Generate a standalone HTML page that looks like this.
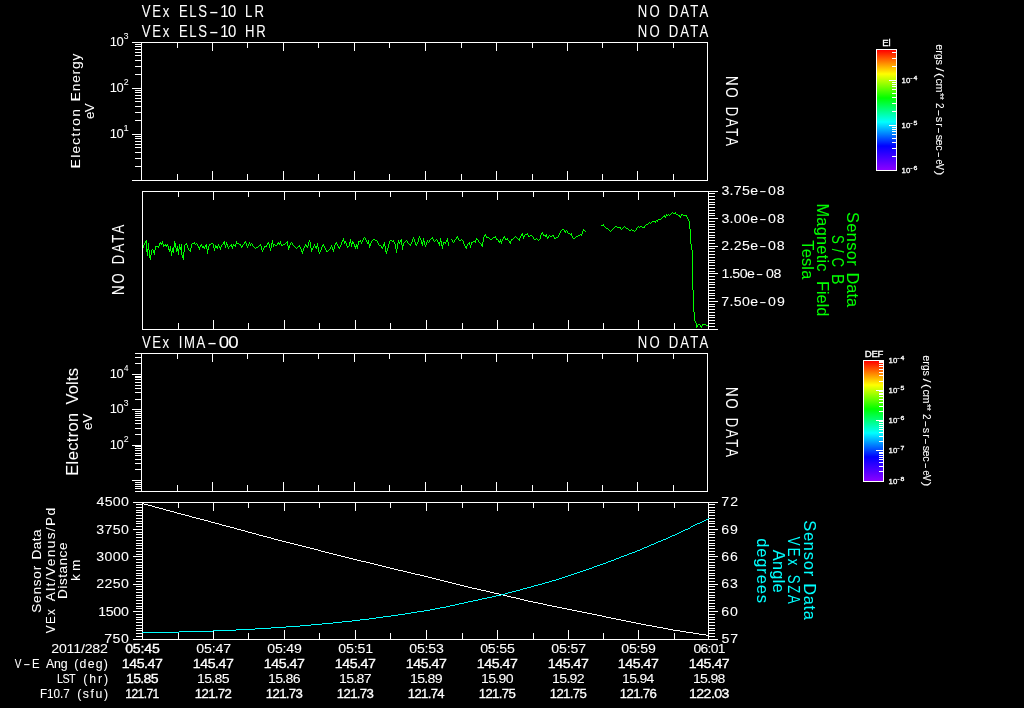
<!DOCTYPE html>
<html lang="en">
<head>
<meta charset="utf-8">
<title>VEx ELS / IMA summary plot 2011/282</title>
<style>
html,body{margin:0;padding:0;background:#000;}
body{width:1024px;height:708px;overflow:hidden;}
svg{display:block;will-change:transform;}
text{font-family:"Liberation Sans",sans-serif;fill:#fff;stroke:#fff;stroke-width:0.06;white-space:pre;}
.l{font-size:16.4px}
.m{font-size:12.3px}
.s{font-size:9.6px}
.b{stroke-width:0.3}
.g{fill:#00ff00;stroke:#00ff00}
.c{fill:#00ffff;stroke:#00ffff}
</style>
</head>
<body>
<svg width="1024" height="708" viewBox="0 0 1024 708">
<rect width="1024" height="708" fill="#000"/>
<defs><linearGradient id="rb" x1="0" y1="0" x2="0" y2="1"><stop offset="0" stop-color="#ff0000"/><stop offset="0.2" stop-color="#ffff00"/><stop offset="0.4" stop-color="#00ff00"/><stop offset="0.6" stop-color="#00ffff"/><stop offset="0.8" stop-color="#0000ff"/><stop offset="1" stop-color="#8c00ff"/></linearGradient></defs>
<rect x="877" y="50" width="19" height="120" fill="url(#rb)"/>
<rect x="864" y="361" width="19" height="120" fill="url(#rb)"/>
<path fill="#fff" shape-rendering="crispEdges" d="M132 42h576v1h-576zM132 180h576v1h-576zM141 42h1v139h-1zM707 42h1v139h-1zM177 42h1v6h-1zM177 174h1v7h-1zM212 42h1v9h-1zM212 171h1v10h-1zM247 42h1v6h-1zM247 174h1v7h-1zM283 42h1v9h-1zM283 171h1v10h-1zM318 42h1v6h-1zM318 174h1v7h-1zM354 42h1v9h-1zM354 171h1v10h-1zM389 42h1v6h-1zM389 174h1v7h-1zM425 42h1v9h-1zM425 171h1v10h-1zM461 42h1v6h-1zM461 174h1v7h-1zM496 42h1v9h-1zM496 171h1v10h-1zM532 42h1v6h-1zM532 174h1v7h-1zM567 42h1v9h-1zM567 171h1v10h-1zM602 42h1v6h-1zM602 174h1v7h-1zM637 42h1v9h-1zM637 171h1v10h-1zM673 42h1v6h-1zM673 174h1v7h-1zM132 42h10v1h-10zM132 88h10v1h-10zM132 134h10v1h-10zM132 180h10v1h-10zM135 166h7v1h-7zM135 158h7v1h-7zM135 152h7v1h-7zM135 147h7v1h-7zM135 144h7v1h-7zM135 141h7v1h-7zM135 138h7v1h-7zM135 136h7v1h-7zM135 120h7v1h-7zM135 112h7v1h-7zM135 106h7v1h-7zM135 101h7v1h-7zM135 98h7v1h-7zM135 95h7v1h-7zM135 92h7v1h-7zM135 90h7v1h-7zM135 74h7v1h-7zM135 66h7v1h-7zM135 60h7v1h-7zM135 55h7v1h-7zM135 52h7v1h-7zM135 49h7v1h-7zM135 46h7v1h-7zM135 44h7v1h-7zM135 353h573v1h-573zM135 491h573v1h-573zM141 353h1v139h-1zM707 353h1v139h-1zM177 353h1v6h-1zM177 485h1v7h-1zM212 353h1v9h-1zM212 482h1v10h-1zM247 353h1v6h-1zM247 485h1v7h-1zM283 353h1v9h-1zM283 482h1v10h-1zM318 353h1v6h-1zM318 485h1v7h-1zM354 353h1v9h-1zM354 482h1v10h-1zM389 353h1v6h-1zM389 485h1v7h-1zM425 353h1v9h-1zM425 482h1v10h-1zM461 353h1v6h-1zM461 485h1v7h-1zM496 353h1v9h-1zM496 482h1v10h-1zM532 353h1v6h-1zM532 485h1v7h-1zM567 353h1v9h-1zM567 482h1v10h-1zM602 353h1v6h-1zM602 485h1v7h-1zM637 353h1v9h-1zM637 482h1v10h-1zM673 353h1v6h-1zM673 485h1v7h-1zM132 374h10v1h-10zM132 409h10v1h-10zM132 445h10v1h-10zM132 480h10v1h-10zM135 488h7v1h-7zM135 486h7v1h-7zM135 484h7v1h-7zM135 482h7v1h-7zM135 469h7v1h-7zM135 463h7v1h-7zM135 459h7v1h-7zM135 455h7v1h-7zM135 453h7v1h-7zM135 450h7v1h-7zM135 448h7v1h-7zM135 446h7v1h-7zM135 434h7v1h-7zM135 428h7v1h-7zM135 423h7v1h-7zM135 420h7v1h-7zM135 417h7v1h-7zM135 415h7v1h-7zM135 413h7v1h-7zM135 411h7v1h-7zM135 399h7v1h-7zM135 392h7v1h-7zM135 388h7v1h-7zM135 385h7v1h-7zM135 382h7v1h-7zM135 379h7v1h-7zM135 377h7v1h-7zM135 376h7v1h-7zM135 363h7v1h-7zM135 357h7v1h-7zM142 191h567v1h-567zM142 329h567v1h-567zM142 191h1v139h-1zM708 191h1v139h-1zM178 191h1v6h-1zM178 323h1v7h-1zM213 191h1v9h-1zM213 320h1v10h-1zM248 191h1v6h-1zM248 323h1v7h-1zM284 191h1v9h-1zM284 320h1v10h-1zM319 191h1v6h-1zM319 323h1v7h-1zM355 191h1v9h-1zM355 320h1v10h-1zM390 191h1v6h-1zM390 323h1v7h-1zM426 191h1v9h-1zM426 320h1v10h-1zM462 191h1v6h-1zM462 323h1v7h-1zM497 191h1v9h-1zM497 320h1v10h-1zM533 191h1v6h-1zM533 323h1v7h-1zM568 191h1v9h-1zM568 320h1v10h-1zM603 191h1v6h-1zM603 323h1v7h-1zM638 191h1v9h-1zM638 320h1v10h-1zM674 191h1v6h-1zM674 323h1v7h-1zM708 191h10v1h-10zM708 193h7v1h-7zM708 196h7v1h-7zM708 199h7v1h-7zM708 202h7v1h-7zM708 204h7v1h-7zM708 207h7v1h-7zM708 210h7v1h-7zM708 213h7v1h-7zM708 215h7v1h-7zM708 218h10v1h-10zM708 221h7v1h-7zM708 224h7v1h-7zM708 226h7v1h-7zM708 229h7v1h-7zM708 232h7v1h-7zM708 235h7v1h-7zM708 237h7v1h-7zM708 240h7v1h-7zM708 243h7v1h-7zM708 246h10v1h-10zM708 248h7v1h-7zM708 251h7v1h-7zM708 254h7v1h-7zM708 257h7v1h-7zM708 260h7v1h-7zM708 262h7v1h-7zM708 265h7v1h-7zM708 268h7v1h-7zM708 271h7v1h-7zM708 273h10v1h-10zM708 276h7v1h-7zM708 279h7v1h-7zM708 282h7v1h-7zM708 284h7v1h-7zM708 287h7v1h-7zM708 290h7v1h-7zM708 293h7v1h-7zM708 295h7v1h-7zM708 298h7v1h-7zM708 301h10v1h-10zM708 304h7v1h-7zM708 306h7v1h-7zM708 309h7v1h-7zM708 312h7v1h-7zM708 315h7v1h-7zM708 317h7v1h-7zM708 320h7v1h-7zM708 323h7v1h-7zM708 326h7v1h-7zM708 329h10v1h-10zM142 502h567v1h-567zM142 639h567v1h-567zM142 502h1v138h-1zM708 502h1v138h-1zM178 502h1v6h-1zM178 633h1v7h-1zM213 502h1v9h-1zM213 630h1v10h-1zM248 502h1v6h-1zM248 633h1v7h-1zM284 502h1v9h-1zM284 630h1v10h-1zM319 502h1v6h-1zM319 633h1v7h-1zM355 502h1v9h-1zM355 630h1v10h-1zM390 502h1v6h-1zM390 633h1v7h-1zM426 502h1v9h-1zM426 630h1v10h-1zM462 502h1v6h-1zM462 633h1v7h-1zM497 502h1v9h-1zM497 630h1v10h-1zM533 502h1v6h-1zM533 633h1v7h-1zM568 502h1v9h-1zM568 630h1v10h-1zM603 502h1v6h-1zM603 633h1v7h-1zM638 502h1v9h-1zM638 630h1v10h-1zM674 502h1v6h-1zM674 633h1v7h-1zM708 502h10v1h-10zM133 502h10v1h-10zM708 504h7v1h-7zM136 504h7v1h-7zM708 507h7v1h-7zM136 507h7v1h-7zM708 510h7v1h-7zM136 510h7v1h-7zM708 512h7v1h-7zM136 512h7v1h-7zM708 515h7v1h-7zM136 515h7v1h-7zM708 518h7v1h-7zM136 518h7v1h-7zM708 521h7v1h-7zM136 521h7v1h-7zM708 523h7v1h-7zM136 523h7v1h-7zM708 526h7v1h-7zM136 526h7v1h-7zM708 529h10v1h-10zM133 529h10v1h-10zM708 532h7v1h-7zM136 532h7v1h-7zM708 534h7v1h-7zM136 534h7v1h-7zM708 537h7v1h-7zM136 537h7v1h-7zM708 540h7v1h-7zM136 540h7v1h-7zM708 543h7v1h-7zM136 543h7v1h-7zM708 545h7v1h-7zM136 545h7v1h-7zM708 548h7v1h-7zM136 548h7v1h-7zM708 551h7v1h-7zM136 551h7v1h-7zM708 554h7v1h-7zM136 554h7v1h-7zM708 556h10v1h-10zM133 556h10v1h-10zM708 559h7v1h-7zM136 559h7v1h-7zM708 562h7v1h-7zM136 562h7v1h-7zM708 565h7v1h-7zM136 565h7v1h-7zM708 567h7v1h-7zM136 567h7v1h-7zM708 570h7v1h-7zM136 570h7v1h-7zM708 573h7v1h-7zM136 573h7v1h-7zM708 575h7v1h-7zM136 575h7v1h-7zM708 578h7v1h-7zM136 578h7v1h-7zM708 581h7v1h-7zM136 581h7v1h-7zM708 584h10v1h-10zM133 584h10v1h-10zM708 586h7v1h-7zM136 586h7v1h-7zM708 589h7v1h-7zM136 589h7v1h-7zM708 592h7v1h-7zM136 592h7v1h-7zM708 595h7v1h-7zM136 595h7v1h-7zM708 597h7v1h-7zM136 597h7v1h-7zM708 600h7v1h-7zM136 600h7v1h-7zM708 603h7v1h-7zM136 603h7v1h-7zM708 606h7v1h-7zM136 606h7v1h-7zM708 608h7v1h-7zM136 608h7v1h-7zM708 611h10v1h-10zM133 611h10v1h-10zM708 614h7v1h-7zM136 614h7v1h-7zM708 617h7v1h-7zM136 617h7v1h-7zM708 619h7v1h-7zM136 619h7v1h-7zM708 622h7v1h-7zM136 622h7v1h-7zM708 625h7v1h-7zM136 625h7v1h-7zM708 628h7v1h-7zM136 628h7v1h-7zM708 630h7v1h-7zM136 630h7v1h-7zM708 633h7v1h-7zM136 633h7v1h-7zM708 636h7v1h-7zM136 636h7v1h-7zM708 639h10v1h-10zM133 639h10v1h-10zM876 49h21v1h-21zM876 170h21v1h-21zM876 49h1v122h-1zM896 49h1v122h-1zM889 80h8v1h-8zM889 125h8v1h-8zM892 156h5v1h-5zM892 148h5v1h-5zM892 142h5v1h-5zM892 138h5v1h-5zM892 134h5v1h-5zM892 131h5v1h-5zM892 129h5v1h-5zM892 127h5v1h-5zM892 111h5v1h-5zM892 103h5v1h-5zM892 97h5v1h-5zM892 93h5v1h-5zM892 89h5v1h-5zM892 86h5v1h-5zM892 84h5v1h-5zM892 82h5v1h-5zM892 66h5v1h-5zM892 58h5v1h-5zM892 52h5v1h-5zM863 360h21v1h-21zM863 481h21v1h-21zM863 360h1v122h-1zM883 360h1v122h-1zM876 390h8v1h-8zM876 420h8v1h-8zM876 450h8v1h-8zM879 471h5v1h-5zM879 466h5v1h-5zM879 462h5v1h-5zM879 459h5v1h-5zM879 457h5v1h-5zM879 455h5v1h-5zM879 453h5v1h-5zM879 452h5v1h-5zM879 441h5v1h-5zM879 436h5v1h-5zM879 432h5v1h-5zM879 429h5v1h-5zM879 427h5v1h-5zM879 425h5v1h-5zM879 423h5v1h-5zM879 421h5v1h-5zM879 411h5v1h-5zM879 406h5v1h-5zM879 402h5v1h-5zM879 399h5v1h-5zM879 396h5v1h-5zM879 394h5v1h-5zM879 393h5v1h-5zM879 391h5v1h-5zM879 381h5v1h-5zM879 375h5v1h-5zM879 372h5v1h-5zM879 369h5v1h-5zM879 366h5v1h-5zM879 364h5v1h-5zM879 362h5v1h-5zM879 361h5v1h-5z"/>
<text transform="translate(110.8,46)" class="m"><tspan x="-0.97" letter-spacing="-0.6" textLength="13.19" lengthAdjust="spacingAndGlyphs">10</tspan></text>
<text transform="translate(124.1,39)" font-size="8.6"><tspan x="-0.34" textLength="4.73" lengthAdjust="spacingAndGlyphs">3</tspan></text>
<text transform="translate(110.8,92)" class="m"><tspan x="-0.97" letter-spacing="-0.6" textLength="13.19" lengthAdjust="spacingAndGlyphs">10</tspan></text>
<text transform="translate(124.1,85)" font-size="8.6"><tspan x="-0.44" textLength="4.89" lengthAdjust="spacingAndGlyphs">2</tspan></text>
<text transform="translate(110.8,138)" class="m"><tspan x="-0.97" letter-spacing="-0.6" textLength="13.19" lengthAdjust="spacingAndGlyphs">10</tspan></text>
<text transform="translate(124.1,131)" font-size="8.6"><tspan x="-0.7" textLength="5.17" lengthAdjust="spacingAndGlyphs">1</tspan></text>
<text transform="translate(110.8,378)" class="m"><tspan x="-0.97" letter-spacing="-0.6" textLength="13.19" lengthAdjust="spacingAndGlyphs">10</tspan></text>
<text transform="translate(124.1,371)" font-size="8.6"><tspan x="-0.2" textLength="4.45" lengthAdjust="spacingAndGlyphs">4</tspan></text>
<text transform="translate(110.8,413)" class="m"><tspan x="-0.97" letter-spacing="-0.6" textLength="13.19" lengthAdjust="spacingAndGlyphs">10</tspan></text>
<text transform="translate(124.1,406)" font-size="8.6"><tspan x="-0.34" textLength="4.73" lengthAdjust="spacingAndGlyphs">3</tspan></text>
<text transform="translate(110.8,449)" class="m"><tspan x="-0.97" letter-spacing="-0.6" textLength="13.19" lengthAdjust="spacingAndGlyphs">10</tspan></text>
<text transform="translate(124.1,442)" font-size="8.6"><tspan x="-0.44" textLength="4.89" lengthAdjust="spacingAndGlyphs">2</tspan></text>
<text transform="translate(722,195)" class="m"><tspan x="-0.57" letter-spacing="0.27" textLength="36.95" lengthAdjust="spacingAndGlyphs">3.75e</tspan><tspan x="37.19" textLength="7.17" lengthAdjust="spacingAndGlyphs">-</tspan><tspan x="46.13" letter-spacing="0.72" textLength="17.39" lengthAdjust="spacingAndGlyphs">08</tspan></text>
<text transform="translate(722,223)" class="m"><tspan x="-0.57" letter-spacing="0.27" textLength="36.95" lengthAdjust="spacingAndGlyphs">3.00e</tspan><tspan x="37.19" textLength="7.17" lengthAdjust="spacingAndGlyphs">-</tspan><tspan x="46.13" letter-spacing="0.72" textLength="17.39" lengthAdjust="spacingAndGlyphs">08</tspan></text>
<text transform="translate(722,250)" class="m"><tspan x="-0.71" letter-spacing="0.3" textLength="37.12" lengthAdjust="spacingAndGlyphs">2.25e</tspan><tspan x="37.19" textLength="7.17" lengthAdjust="spacingAndGlyphs">-</tspan><tspan x="46.13" letter-spacing="0.72" textLength="17.39" lengthAdjust="spacingAndGlyphs">08</tspan></text>
<text transform="translate(722.6,278)" class="m"><tspan x="-1.06" letter-spacing="-0.45" textLength="32.82" lengthAdjust="spacingAndGlyphs">1.50e</tspan><tspan x="33.34" textLength="7.17" lengthAdjust="spacingAndGlyphs">-</tspan><tspan x="43.33" letter-spacing="-0.15" textLength="15.39" lengthAdjust="spacingAndGlyphs">08</tspan></text>
<text transform="translate(722,306)" class="m"><tspan x="-0.71" letter-spacing="0.3" textLength="37.12" lengthAdjust="spacingAndGlyphs">7.50e</tspan><tspan x="37.19" textLength="7.17" lengthAdjust="spacingAndGlyphs">-</tspan><tspan x="46.13" letter-spacing="0.78" textLength="17.54" lengthAdjust="spacingAndGlyphs">09</tspan></text>
<text transform="translate(96.9,506)" class="m"><tspan x="-0.35" letter-spacing="0.22" textLength="32.46" lengthAdjust="spacingAndGlyphs">4500</tspan></text>
<text transform="translate(96.9,534)" class="m"><tspan x="-0.57" letter-spacing="0.28" textLength="32.75" lengthAdjust="spacingAndGlyphs">3750</tspan></text>
<text transform="translate(96.9,561)" class="m"><tspan x="-0.57" letter-spacing="0.28" textLength="32.75" lengthAdjust="spacingAndGlyphs">3000</tspan></text>
<text transform="translate(96.9,588)" class="m"><tspan x="-0.71" letter-spacing="0.32" textLength="32.93" lengthAdjust="spacingAndGlyphs">2250</tspan></text>
<text transform="translate(99.3,616)" class="m"><tspan x="-1.06" letter-spacing="-0.27" textLength="30.21" lengthAdjust="spacingAndGlyphs">1500</tspan></text>
<text transform="translate(105,643)" class="m"><tspan x="-0.71" letter-spacing="0.4" textLength="24.98" lengthAdjust="spacingAndGlyphs">750</tspan></text>
<text transform="translate(722,506)" class="m"><tspan x="-0.71" letter-spacing="0.88" textLength="17.76" lengthAdjust="spacingAndGlyphs">72</tspan></text>
<text transform="translate(722,534)" class="m"><tspan x="-0.71" letter-spacing="0.82" textLength="17.62" lengthAdjust="spacingAndGlyphs">69</tspan></text>
<text transform="translate(722,561)" class="m"><tspan x="-0.71" letter-spacing="0.82" textLength="17.62" lengthAdjust="spacingAndGlyphs">66</tspan></text>
<text transform="translate(722,588)" class="m"><tspan x="-0.71" letter-spacing="0.82" textLength="17.62" lengthAdjust="spacingAndGlyphs">63</tspan></text>
<text transform="translate(722,616)" class="m"><tspan x="-0.71" letter-spacing="0.76" textLength="17.48" lengthAdjust="spacingAndGlyphs">60</tspan></text>
<text transform="translate(722,643)" class="m"><tspan x="-0.57" letter-spacing="0.76" textLength="17.48" lengthAdjust="spacingAndGlyphs">57</tspan></text>
<path fill="#fff" shape-rendering="crispEdges" d="M142 503h2v1h-2zM144 504h4v1h-4zM148 505h4v1h-4zM152 506h3v1h-3zM155 507h4v1h-4zM159 508h4v1h-4zM163 509h3v1h-3zM166 510h4v1h-4zM170 511h4v1h-4zM174 512h3v1h-3zM177 513h4v1h-4zM181 514h4v1h-4zM185 515h4v1h-4zM189 516h3v1h-3zM192 517h4v1h-4zM196 518h4v1h-4zM200 519h4v1h-4zM204 520h4v1h-4zM208 521h3v1h-3zM211 522h4v1h-4zM215 523h4v1h-4zM219 524h3v1h-3zM222 525h4v1h-4zM226 526h4v1h-4zM230 527h4v1h-4zM234 528h3v1h-3zM237 529h4v1h-4zM241 530h4v1h-4zM245 531h3v1h-3zM248 532h4v1h-4zM252 533h4v1h-4zM256 534h3v1h-3zM259 535h4v1h-4zM263 536h4v1h-4zM267 537h4v1h-4zM271 538h3v1h-3zM274 539h4v1h-4zM278 540h4v1h-4zM282 541h4v1h-4zM286 542h4v1h-4zM290 543h4v1h-4zM294 544h4v1h-4zM298 545h4v1h-4zM302 546h4v1h-4zM306 547h4v1h-4zM310 548h4v1h-4zM314 549h4v1h-4zM318 550h3v1h-3zM321 551h4v1h-4zM325 552h4v1h-4zM329 553h4v1h-4zM333 554h4v1h-4zM337 555h4v1h-4zM341 556h4v1h-4zM345 557h4v1h-4zM349 558h4v1h-4zM353 559h4v1h-4zM357 560h4v1h-4zM361 561h5v1h-5zM366 562h4v1h-4zM370 563h4v1h-4zM374 564h4v1h-4zM378 565h4v1h-4zM382 566h4v1h-4zM386 567h4v1h-4zM390 568h4v1h-4zM394 569h4v1h-4zM398 570h5v1h-5zM403 571h4v1h-4zM407 572h4v1h-4zM411 573h4v1h-4zM415 574h5v1h-5zM420 575h4v1h-4zM424 576h4v1h-4zM428 577h4v1h-4zM432 578h4v1h-4zM436 579h4v1h-4zM440 580h4v1h-4zM444 581h4v1h-4zM448 582h4v1h-4zM452 583h4v1h-4zM456 584h4v1h-4zM460 585h4v1h-4zM464 586h4v1h-4zM468 587h4v1h-4zM472 588h5v1h-5zM477 589h4v1h-4zM481 590h5v1h-5zM486 591h4v1h-4zM490 592h4v1h-4zM494 593h5v1h-5zM499 594h4v1h-4zM503 595h4v1h-4zM507 596h4v1h-4zM511 597h5v1h-5zM516 598h4v1h-4zM520 599h4v1h-4zM524 600h4v1h-4zM528 601h5v1h-5zM533 602h5v1h-5zM538 603h5v1h-5zM543 604h4v1h-4zM547 605h5v1h-5zM552 606h5v1h-5zM557 607h5v1h-5zM562 608h5v1h-5zM567 609h5v1h-5zM572 610h5v1h-5zM577 611h5v1h-5zM582 612h5v1h-5zM587 613h5v1h-5zM592 614h5v1h-5zM597 615h5v1h-5zM602 616h4v1h-4zM606 617h5v1h-5zM611 618h5v1h-5zM616 619h5v1h-5zM621 620h5v1h-5zM626 621h5v1h-5zM631 622h5v1h-5zM636 623h5v1h-5zM641 624h5v1h-5zM646 625h6v1h-6zM652 626h5v1h-5zM657 627h6v1h-6zM663 628h5v1h-5zM668 629h5v1h-5zM673 630h7v1h-7zM680 631h6v1h-6zM686 632h7v1h-7zM693 633h6v1h-6zM699 634h7v1h-7zM706 635h2v1h-2z"/>
<path fill="#00ffff" shape-rendering="crispEdges" d="M708 518h1v1h-1zM706 519h2v1h-2zM704 520h2v1h-2zM702 521h2v1h-2zM700 522h2v1h-2zM697 523h3v1h-3zM695 524h2v1h-2zM693 525h2v1h-2zM691 526h2v1h-2zM690 527h1v1h-1zM688 528h2v1h-2zM685 529h3v1h-3zM683 530h2v1h-2zM681 531h2v1h-2zM679 532h2v1h-2zM677 533h2v1h-2zM675 534h2v1h-2zM672 535h3v1h-3zM670 536h2v1h-2zM668 537h2v1h-2zM666 538h2v1h-2zM663 539h3v1h-3zM661 540h2v1h-2zM658 541h3v1h-3zM656 542h2v1h-2zM654 543h2v1h-2zM651 544h3v1h-3zM649 545h2v1h-2zM647 546h2v1h-2zM644 547h3v1h-3zM642 548h2v1h-2zM640 549h2v1h-2zM637 550h3v1h-3zM635 551h2v1h-2zM632 552h3v1h-3zM629 553h3v1h-3zM627 554h2v1h-2zM624 555h3v1h-3zM621 556h3v1h-3zM619 557h2v1h-2zM616 558h3v1h-3zM614 559h2v1h-2zM611 560h3v1h-3zM608 561h3v1h-3zM606 562h2v1h-2zM603 563h3v1h-3zM600 564h3v1h-3zM597 565h3v1h-3zM594 566h3v1h-3zM592 567h2v1h-2zM589 568h3v1h-3zM586 569h3v1h-3zM583 570h3v1h-3zM580 571h3v1h-3zM577 572h3v1h-3zM574 573h3v1h-3zM571 574h3v1h-3zM568 575h3v1h-3zM565 576h3v1h-3zM562 577h3v1h-3zM559 578h3v1h-3zM556 579h3v1h-3zM552 580h4v1h-4zM549 581h3v1h-3zM545 582h4v1h-4zM542 583h3v1h-3zM538 584h4v1h-4zM534 585h4v1h-4zM531 586h3v1h-3zM527 587h4v1h-4zM523 588h4v1h-4zM520 589h3v1h-3zM516 590h4v1h-4zM512 591h4v1h-4zM508 592h4v1h-4zM505 593h3v1h-3zM501 594h4v1h-4zM496 595h5v1h-5zM492 596h4v1h-4zM487 597h5v1h-5zM482 598h5v1h-5zM478 599h4v1h-4zM473 600h5v1h-5zM468 601h5v1h-5zM464 602h4v1h-4zM459 603h5v1h-5zM455 604h4v1h-4zM450 605h5v1h-5zM446 606h4v1h-4zM440 607h6v1h-6zM435 608h5v1h-5zM430 609h5v1h-5zM424 610h6v1h-6zM417 611h7v1h-7zM411 612h6v1h-6zM405 613h6v1h-6zM398 614h7v1h-7zM391 615h7v1h-7zM383 616h8v1h-8zM376 617h7v1h-7zM369 618h7v1h-7zM360 619h9v1h-9zM352 620h8v1h-8zM342 621h10v1h-10zM333 622h9v1h-9zM322 623h11v1h-11zM311 624h11v1h-11zM300 625h11v1h-11zM286 626h14v1h-14zM271 627h15v1h-15zM255 628h16v1h-16zM236 629h19v1h-19zM213 630h23v1h-23zM179 631h34v1h-34zM142 632h37v1h-37z"/>
<path fill="#00ff00" shape-rendering="crispEdges" d="M143 245h1v3h-1zM144 243h1v2h-1zM145 241h1v2h-1zM146 240h1v12h-1zM147 249h1v7h-1zM148 243h1v7h-1zM149 250h1v8h-1zM150 255h1v5h-1zM151 250h1v5h-1zM152 249h1v1h-1zM153 250h1v3h-1zM154 250h1v5h-1zM155 246h1v4h-1zM156 246h1v1h-1zM157 246h1v1h-1zM158 246h1v2h-1zM159 243h1v3h-1zM160 242h1v2h-1zM161 243h1v2h-1zM162 241h1v3h-1zM163 244h1v3h-1zM164 245h1v1h-1zM165 244h1v2h-1zM166 245h1v2h-1zM167 244h1v2h-1zM168 246h1v4h-1zM169 249h1v3h-1zM170 246h1v5h-1zM171 251h1v5h-1zM172 248h1v4h-1zM173 247h1v6h-1zM174 241h1v6h-1zM175 243h1v5h-1zM176 248h1v4h-1zM177 246h1v5h-1zM178 249h1v6h-1zM179 244h1v5h-1zM180 247h1v3h-1zM181 244h1v11h-1zM182 255h1v3h-1zM183 252h1v8h-1zM184 245h1v7h-1zM185 244h1v1h-1zM186 243h1v2h-1zM187 245h1v3h-1zM188 248h1v2h-1zM189 250h1v1h-1zM190 248h1v4h-1zM191 244h1v4h-1zM192 243h1v1h-1zM193 243h1v1h-1zM194 242h1v2h-1zM195 244h1v1h-1zM196 243h1v1h-1zM197 244h1v2h-1zM198 246h1v2h-1zM199 247h1v3h-1zM200 245h1v2h-1zM201 244h1v2h-1zM202 246h1v2h-1zM203 246h1v2h-1zM204 247h1v2h-1zM205 245h1v2h-1zM206 244h1v5h-1zM207 249h1v5h-1zM208 246h1v4h-1zM209 244h1v2h-1zM210 244h1v1h-1zM211 243h1v1h-1zM212 243h1v1h-1zM213 244h1v4h-1zM214 248h1v3h-1zM215 245h1v3h-1zM216 246h1v2h-1zM217 246h1v3h-1zM218 244h1v2h-1zM219 246h1v2h-1zM220 247h1v3h-1zM221 245h1v2h-1zM222 244h1v1h-1zM223 242h1v2h-1zM224 241h1v4h-1zM225 245h1v3h-1zM226 242h1v3h-1zM227 244h1v3h-1zM228 247h1v2h-1zM229 246h1v1h-1zM230 245h1v1h-1zM231 244h1v3h-1zM232 246h1v3h-1zM233 244h1v2h-1zM234 245h1v1h-1zM235 244h1v3h-1zM236 241h1v3h-1zM237 243h1v1h-1zM238 243h1v1h-1zM239 244h1v1h-1zM240 244h1v2h-1zM241 246h1v2h-1zM242 245h1v2h-1zM243 244h1v1h-1zM244 242h1v2h-1zM245 241h1v2h-1zM246 243h1v3h-1zM247 246h1v2h-1zM248 244h1v2h-1zM249 242h1v2h-1zM250 244h1v2h-1zM251 243h1v1h-1zM252 244h1v2h-1zM253 246h1v1h-1zM254 247h1v1h-1zM255 248h1v1h-1zM256 247h1v1h-1zM257 247h1v1h-1zM258 246h1v1h-1zM259 245h1v1h-1zM260 244h1v2h-1zM261 246h1v4h-1zM262 250h1v2h-1zM263 248h1v2h-1zM264 246h1v2h-1zM265 246h1v1h-1zM266 245h1v2h-1zM267 243h1v2h-1zM268 242h1v2h-1zM269 244h1v4h-1zM270 248h1v3h-1zM271 243h1v5h-1zM272 240h1v4h-1zM273 244h1v3h-1zM274 244h1v1h-1zM275 245h1v1h-1zM276 245h1v1h-1zM277 243h1v2h-1zM278 242h1v2h-1zM279 243h1v2h-1zM280 241h1v3h-1zM281 244h1v2h-1zM282 245h1v1h-1zM283 244h1v1h-1zM284 244h1v1h-1zM285 243h1v1h-1zM286 242h1v1h-1zM287 241h1v5h-1zM288 246h1v4h-1zM289 245h1v3h-1zM290 243h1v2h-1zM291 242h1v1h-1zM292 243h1v2h-1zM293 245h1v1h-1zM294 246h1v1h-1zM295 247h1v1h-1zM296 248h1v1h-1zM297 247h1v1h-1zM298 246h1v1h-1zM299 245h1v2h-1zM300 247h1v2h-1zM301 249h1v3h-1zM302 251h1v3h-1zM303 248h1v3h-1zM304 246h1v2h-1zM305 244h1v2h-1zM306 245h1v2h-1zM307 246h1v2h-1zM308 242h1v4h-1zM309 240h1v2h-1zM310 242h1v6h-1zM311 248h1v4h-1zM312 248h1v2h-1zM313 246h1v2h-1zM314 244h1v2h-1zM315 246h1v2h-1zM316 246h1v3h-1zM317 243h1v4h-1zM318 247h1v5h-1zM319 252h1v2h-1zM320 250h1v2h-1zM321 247h1v3h-1zM322 245h1v2h-1zM323 244h1v2h-1zM324 246h1v2h-1zM325 248h1v2h-1zM326 250h1v2h-1zM327 251h1v1h-1zM328 250h1v1h-1zM329 249h1v1h-1zM330 247h1v2h-1zM331 245h1v2h-1zM332 247h1v3h-1zM333 249h1v3h-1zM334 245h1v4h-1zM335 243h1v2h-1zM336 242h1v2h-1zM337 244h1v2h-1zM338 246h1v2h-1zM339 247h1v2h-1zM340 245h1v2h-1zM341 242h1v3h-1zM342 240h1v2h-1zM343 238h1v3h-1zM344 241h1v3h-1zM345 241h1v2h-1zM346 243h1v3h-1zM347 246h1v2h-1zM348 246h1v1h-1zM349 242h1v4h-1zM350 239h1v4h-1zM351 243h1v4h-1zM352 241h1v3h-1zM353 242h1v2h-1zM354 244h1v3h-1zM355 246h1v3h-1zM356 244h1v3h-1zM357 245h1v4h-1zM358 241h1v4h-1zM359 241h1v1h-1zM360 240h1v2h-1zM361 242h1v2h-1zM362 240h1v2h-1zM363 238h1v2h-1zM364 237h1v1h-1zM365 238h1v2h-1zM366 240h1v2h-1zM367 242h1v2h-1zM368 240h1v4h-1zM369 244h1v4h-1zM370 243h1v3h-1zM371 241h1v2h-1zM372 240h1v1h-1zM373 239h1v1h-1zM374 239h1v1h-1zM375 240h1v1h-1zM376 240h1v1h-1zM377 241h1v2h-1zM378 243h1v2h-1zM379 245h1v1h-1zM380 245h1v1h-1zM381 246h1v2h-1zM382 247h1v2h-1zM383 244h1v3h-1zM384 242h1v4h-1zM385 246h1v6h-1zM386 251h1v3h-1zM387 248h1v3h-1zM388 244h1v4h-1zM389 241h1v3h-1zM390 240h1v1h-1zM391 240h1v1h-1zM392 241h1v1h-1zM393 240h1v2h-1zM394 242h1v2h-1zM395 244h1v5h-1zM396 249h1v4h-1zM397 243h1v6h-1zM398 240h1v3h-1zM399 242h1v2h-1zM400 240h1v2h-1zM401 239h1v6h-1zM402 245h1v5h-1zM403 243h1v3h-1zM404 242h1v1h-1zM405 241h1v1h-1zM406 240h1v1h-1zM407 241h1v2h-1zM408 243h1v1h-1zM409 244h1v1h-1zM410 244h1v2h-1zM411 242h1v2h-1zM412 239h1v3h-1zM413 237h1v2h-1zM414 239h1v3h-1zM415 242h1v3h-1zM416 244h1v2h-1zM417 242h1v2h-1zM418 238h1v4h-1zM419 236h1v2h-1zM420 238h1v2h-1zM421 240h1v4h-1zM422 242h1v4h-1zM423 238h1v4h-1zM424 241h1v4h-1zM425 245h1v2h-1zM426 242h1v3h-1zM427 240h1v2h-1zM428 242h1v1h-1zM429 240h1v2h-1zM430 239h1v1h-1zM431 238h1v1h-1zM432 237h1v2h-1zM433 239h1v2h-1zM434 241h1v1h-1zM435 240h1v1h-1zM436 239h1v1h-1zM437 240h1v2h-1zM438 242h1v2h-1zM439 242h1v4h-1zM440 238h1v4h-1zM441 241h1v5h-1zM442 245h1v4h-1zM443 242h1v3h-1zM444 242h1v1h-1zM445 242h1v2h-1zM446 240h1v2h-1zM447 238h1v4h-1zM448 242h1v4h-1z"/>
<path fill="#00ff00" shape-rendering="crispEdges" d="M451 239h1v1h-1zM452 240h1v2h-1zM453 242h1v1h-1zM454 240h1v2h-1zM455 239h1v1h-1zM456 237h1v2h-1zM457 236h1v2h-1zM458 238h1v2h-1zM459 240h1v1h-1zM460 240h1v1h-1zM461 239h1v1h-1zM462 240h1v1h-1zM463 241h1v3h-1zM464 244h1v2h-1zM465 246h1v2h-1zM466 246h1v3h-1zM467 244h1v2h-1zM468 243h1v1h-1zM469 242h1v3h-1zM470 245h1v3h-1zM471 242h1v3h-1zM472 242h1v1h-1zM473 241h1v1h-1zM474 241h1v1h-1zM475 240h1v3h-1zM476 238h1v2h-1zM477 239h1v1h-1zM478 240h1v2h-1zM479 242h1v1h-1zM480 243h1v1h-1zM481 244h1v2h-1zM482 242h1v5h-1zM483 237h1v5h-1zM484 235h1v2h-1zM485 234h1v2h-1zM486 236h1v2h-1zM487 237h1v1h-1zM488 237h1v1h-1zM489 238h1v1h-1zM490 239h1v1h-1zM491 239h1v1h-1zM492 238h1v1h-1zM493 237h1v1h-1zM494 237h1v1h-1zM495 236h1v2h-1zM496 238h1v2h-1zM497 239h1v1h-1zM498 240h1v2h-1zM499 241h1v2h-1zM500 239h1v3h-1zM501 241h1v3h-1zM502 239h1v2h-1zM503 237h1v2h-1zM504 236h1v2h-1zM505 238h1v2h-1zM506 239h1v1h-1zM507 238h1v2h-1zM508 240h1v1h-1zM509 241h1v2h-1zM510 241h1v3h-1zM511 239h1v2h-1zM512 239h1v1h-1zM513 238h1v1h-1zM514 237h1v1h-1zM515 236h1v1h-1zM516 237h1v1h-1zM517 238h1v1h-1zM518 239h1v1h-1zM519 238h1v3h-1zM520 236h1v2h-1zM521 234h1v2h-1zM522 233h1v3h-1zM523 236h1v3h-1zM524 235h1v2h-1zM525 234h1v1h-1zM526 234h1v1h-1zM527 233h1v2h-1zM528 235h1v2h-1zM529 236h1v1h-1zM530 235h1v1h-1zM531 235h1v1h-1zM532 236h1v1h-1zM533 237h1v2h-1zM534 239h1v1h-1zM535 239h1v1h-1zM536 238h1v1h-1zM537 239h1v1h-1zM538 240h1v1h-1zM539 239h1v1h-1zM540 235h1v4h-1zM541 233h1v2h-1zM542 232h1v2h-1zM543 234h1v2h-1zM544 235h1v1h-1zM545 235h1v2h-1zM546 234h1v3h-1zM547 237h1v2h-1zM548 236h1v2h-1zM549 235h1v1h-1zM550 236h1v1h-1zM551 236h1v1h-1zM552 235h1v1h-1zM553 235h1v2h-1zM554 237h1v2h-1zM555 238h1v1h-1zM556 237h1v1h-1zM557 237h1v1h-1zM558 235h1v2h-1zM559 233h1v2h-1zM560 231h1v2h-1zM561 230h1v1h-1zM562 229h1v1h-1zM563 229h1v1h-1zM564 230h1v2h-1zM565 231h1v2h-1zM566 230h1v1h-1zM567 231h1v2h-1zM568 233h1v1h-1zM569 233h1v1h-1zM570 234h1v1h-1zM571 233h1v3h-1zM572 236h1v2h-1zM573 238h1v1h-1zM574 238h1v1h-1zM575 237h1v1h-1zM576 236h1v1h-1zM577 236h1v1h-1zM578 235h1v1h-1zM579 235h1v1h-1zM580 234h1v1h-1zM581 234h1v2h-1zM582 231h1v3h-1zM583 229h1v2h-1zM584 230h1v1h-1zM585 231h1v1h-1z"/>
<path fill="#00ff00" shape-rendering="crispEdges" d="M601 225h1v1h-1zM602 225h1v1h-1zM603 224h1v2h-1zM604 226h1v1h-1zM605 227h1v1h-1zM606 228h1v1h-1zM607 228h1v1h-1zM608 229h1v1h-1zM609 230h1v1h-1zM610 231h1v1h-1zM611 230h1v1h-1zM612 229h1v1h-1zM613 228h1v1h-1zM614 227h1v1h-1zM615 226h1v1h-1zM616 226h1v1h-1zM617 227h1v1h-1zM618 227h1v1h-1zM619 227h1v1h-1zM620 227h1v2h-1zM621 229h1v1h-1zM622 228h1v1h-1zM623 227h1v1h-1zM624 226h1v1h-1zM625 227h1v1h-1zM626 228h1v1h-1zM627 228h1v1h-1zM628 229h1v1h-1zM629 230h1v1h-1zM630 230h1v1h-1zM631 229h1v1h-1zM632 230h1v1h-1zM633 230h1v1h-1zM634 231h1v1h-1zM635 230h1v1h-1zM636 228h1v2h-1zM637 227h1v1h-1zM638 226h1v1h-1zM639 227h1v1h-1zM640 226h1v1h-1zM641 226h1v1h-1zM642 227h1v1h-1zM643 227h1v1h-1zM644 226h1v2h-1zM645 225h1v1h-1zM646 224h1v1h-1zM647 224h1v1h-1zM648 223h1v1h-1zM649 222h1v1h-1zM650 223h1v1h-1zM651 222h1v1h-1zM652 221h1v1h-1zM653 221h1v1h-1zM654 221h1v1h-1zM655 221h1v2h-1zM656 220h1v1h-1zM657 220h1v2h-1zM658 219h1v1h-1zM659 219h1v1h-1zM660 219h1v1h-1zM661 218h1v1h-1zM662 217h1v1h-1zM663 216h1v1h-1zM664 215h1v2h-1zM665 216h1v2h-1zM666 214h1v2h-1zM667 215h1v1h-1zM668 214h1v1h-1zM669 215h1v1h-1zM670 214h1v1h-1zM671 213h1v1h-1zM672 212h1v1h-1zM673 213h1v1h-1zM674 213h1v1h-1zM675 212h1v2h-1zM676 214h1v1h-1zM677 214h1v1h-1zM678 215h1v1h-1zM679 215h1v2h-1zM680 216h1v2h-1zM681 214h1v2h-1zM682 214h1v1h-1zM683 215h1v1h-1zM684 215h1v1h-1zM685 215h1v1h-1zM686 215h1v2h-1zM687 217h1v2h-1zM688 219h1v2h-1zM689 221h1v8h-1zM690 229h1v15h-1zM691 244h1v6h-1zM692 250h1v40h-1zM693 290h1v22h-1zM694 312h1v9h-1zM695 321h1v2h-1zM696 323h1v5h-1zM697 325h1v2h-1zM698 324h1v1h-1zM699 324h1v1h-1zM700 325h1v2h-1zM701 326h1v2h-1zM702 324h1v2h-1zM703 324h1v1h-1zM704 324h1v1h-1zM705 324h1v1h-1zM706 325h1v1h-1zM707 325h1v1h-1z"/>
<text transform="translate(141.7,17)" class="l"><tspan x="-0.07" letter-spacing="2.2" textLength="29.34" lengthAdjust="spacingAndGlyphs">VEx</tspan> <tspan x="37.25" letter-spacing="2.03" textLength="29.66" lengthAdjust="spacingAndGlyphs">ELS</tspan><tspan x="67.19" textLength="9.56" lengthAdjust="spacingAndGlyphs">-</tspan><tspan x="78.68" letter-spacing="-0.6" textLength="15.5" lengthAdjust="spacingAndGlyphs">10</tspan> <tspan x="103.25" letter-spacing="2.89" textLength="21.4" lengthAdjust="spacingAndGlyphs">LR</tspan></text>
<text transform="translate(638.8,17)" class="l"><tspan x="-1.05" letter-spacing="2.78" textLength="24.13" lengthAdjust="spacingAndGlyphs">NO</tspan> <tspan x="29.85" letter-spacing="2.73" textLength="41.78" lengthAdjust="spacingAndGlyphs">DATA</tspan></text>
<text transform="translate(141.7,37)" class="l"><tspan x="-0.07" letter-spacing="2.2" textLength="29.34" lengthAdjust="spacingAndGlyphs">VEx</tspan> <tspan x="37.25" letter-spacing="2.03" textLength="29.66" lengthAdjust="spacingAndGlyphs">ELS</tspan><tspan x="67.19" textLength="9.56" lengthAdjust="spacingAndGlyphs">-</tspan><tspan x="78.68" letter-spacing="-0.6" textLength="15.5" lengthAdjust="spacingAndGlyphs">10</tspan> <tspan x="103.25" letter-spacing="2.43" textLength="22.84" lengthAdjust="spacingAndGlyphs">HR</tspan></text>
<text transform="translate(638.8,37)" class="l"><tspan x="-1.05" letter-spacing="2.78" textLength="24.13" lengthAdjust="spacingAndGlyphs">NO</tspan> <tspan x="29.85" letter-spacing="2.73" textLength="41.78" lengthAdjust="spacingAndGlyphs">DATA</tspan></text>
<text transform="translate(142.1,348)" class="l"><tspan x="-0.07" letter-spacing="1.89" textLength="28.59" lengthAdjust="spacingAndGlyphs">VEx</tspan> <tspan x="36.72" letter-spacing="1.93" textLength="27.96" lengthAdjust="spacingAndGlyphs">IMA</tspan><tspan x="65.24" textLength="9.56" lengthAdjust="spacingAndGlyphs">-</tspan><tspan x="76.55" letter-spacing="-0.6" textLength="19.46" lengthAdjust="spacingAndGlyphs">00</tspan></text>
<text transform="translate(638.8,348)" class="l"><tspan x="-1.05" letter-spacing="2.78" textLength="24.13" lengthAdjust="spacingAndGlyphs">NO</tspan> <tspan x="29.85" letter-spacing="2.73" textLength="41.78" lengthAdjust="spacingAndGlyphs">DATA</tspan></text>
<text transform="translate(725.7,77) rotate(90)" class="l"><tspan x="-1.05" letter-spacing="2.66" textLength="23.93" lengthAdjust="spacingAndGlyphs">NO</tspan> <tspan x="29.85" letter-spacing="2.52" textLength="41.11" lengthAdjust="spacingAndGlyphs">DATA</tspan></text>
<text transform="translate(725.7,388) rotate(90)" class="l"><tspan x="-1.05" letter-spacing="2.66" textLength="23.93" lengthAdjust="spacingAndGlyphs">NO</tspan> <tspan x="29.85" letter-spacing="2.52" textLength="41.11" lengthAdjust="spacingAndGlyphs">DATA</tspan></text>
<text transform="translate(124.1,294) rotate(-90)" class="l"><tspan x="-1.05" letter-spacing="2.53" textLength="23.73" lengthAdjust="spacingAndGlyphs">NO</tspan> <tspan x="29.75" letter-spacing="2.73" textLength="41.78" lengthAdjust="spacingAndGlyphs">DATA</tspan></text>
<text transform="translate(79.9,167.1) rotate(-90)" font-size="13.6"><tspan x="-1.09" letter-spacing="1.29">Electron</tspan> <tspan x="65.91" letter-spacing="0.87">Energy</tspan></text>
<text transform="translate(94,118.4) rotate(-90)" font-size="13.6"><tspan x="-0.6" letter-spacing="-0.6" textLength="15.12" lengthAdjust="spacingAndGlyphs">eV</tspan></text>
<text transform="translate(78,474.4) rotate(-90)" class="l"><tspan x="-1.31" letter-spacing="0.38">Electron</tspan> <tspan x="69.82" letter-spacing="0.27">Volts</tspan></text>
<text transform="translate(92,429.5) rotate(-90)" font-size="13.6"><tspan x="-0.61" letter-spacing="-0.31">eV</tspan></text>
<text transform="translate(846.7,212.7) rotate(90)" class="l g"><tspan x="-0.74" letter-spacing="0.34">Sensor</tspan> <tspan x="59.69" letter-spacing="0.04">Data</tspan></text>
<text transform="translate(832,235.6) rotate(90)" class="l g"><tspan x="-0.59" letter-spacing="6.29" textLength="36.98" lengthAdjust="spacingAndGlyphs">S/C</tspan> <tspan x="38.53" textLength="10.6" lengthAdjust="spacingAndGlyphs">B</tspan></text>
<text transform="translate(817,204.7) rotate(90)" class="l g"><tspan x="-1.31" letter-spacing="0.23">Magnetic</tspan> <tspan x="76.19" letter-spacing="-0.01">Field</tspan></text>
<text transform="translate(801.8,240.7) rotate(90)" class="l g"><tspan x="-0.33" letter-spacing="0.16">Tesla</tspan></text>
<text transform="translate(41.2,612.2) rotate(-90)" font-size="13.6"><tspan x="-0.61" letter-spacing="0.79">Sensor</tspan> <tspan x="52.71" letter-spacing="0.46">Data</tspan></text>
<text transform="translate(54.6,633.2) rotate(-90)" font-size="13.6"><tspan x="-0.06" letter-spacing="1.68" textLength="25.49" lengthAdjust="spacingAndGlyphs">VEx</tspan> <tspan x="31.83" letter-spacing="1.42">Alt/Venus/Pd</tspan></text>
<text transform="translate(67.3,597.9) rotate(-90)" font-size="13.6"><tspan x="-1.09" letter-spacing="0.51">Distance</tspan></text>
<text transform="translate(80.3,580) rotate(-90)" font-size="13.6"><tspan x="-0.88" letter-spacing="2.98">km</tspan></text>
<text transform="translate(803.9,521) rotate(90)" class="l c"><tspan x="-0.74" letter-spacing="0.78">Sensor</tspan> <tspan x="62.29" letter-spacing="0.64">Data</tspan></text>
<text transform="translate(788.2,536.8) rotate(90)" class="l c"><tspan x="-0.07" letter-spacing="2.76" textLength="30.69" lengthAdjust="spacingAndGlyphs">VEx</tspan> <tspan x="37.91" letter-spacing="2.17" textLength="30.72" lengthAdjust="spacingAndGlyphs">SZA</tspan></text>
<text transform="translate(773.4,549.8) rotate(90)" class="l c"><tspan x="-0.08" letter-spacing="0.25">Angle</tspan></text>
<text transform="translate(757.3,538.8) rotate(90)" class="l c"><tspan x="-0.66" letter-spacing="0.92">degrees</tspan></text>
<text transform="translate(51.9,653)" class="m"><tspan x="-0.71" letter-spacing="-0.15" textLength="56.57" lengthAdjust="spacingAndGlyphs">2011/282</tspan></text>
<text transform="translate(125.75,653)" class="m b"><tspan x="-0.57" letter-spacing="-0.16" textLength="34.48" lengthAdjust="spacingAndGlyphs">05:45</tspan></text>
<text transform="translate(196.75,653)" class="m"><tspan x="-0.57" letter-spacing="-0.13" textLength="34.66" lengthAdjust="spacingAndGlyphs">05:47</tspan></text>
<text transform="translate(267.75,653)" class="m"><tspan x="-0.57" letter-spacing="-0.14" textLength="34.57" lengthAdjust="spacingAndGlyphs">05:49</tspan></text>
<text transform="translate(338.75,653)" class="m"><tspan x="-0.57" letter-spacing="-0.13" textLength="34.66" lengthAdjust="spacingAndGlyphs">05:51</tspan></text>
<text transform="translate(409.75,653)" class="m"><tspan x="-0.57" letter-spacing="-0.14" textLength="34.57" lengthAdjust="spacingAndGlyphs">05:53</tspan></text>
<text transform="translate(480.75,653)" class="m"><tspan x="-0.57" letter-spacing="-0.16" textLength="34.48" lengthAdjust="spacingAndGlyphs">05:55</tspan></text>
<text transform="translate(551.75,653)" class="m"><tspan x="-0.57" letter-spacing="-0.13" textLength="34.66" lengthAdjust="spacingAndGlyphs">05:57</tspan></text>
<text transform="translate(621.75,653)" class="m"><tspan x="-0.57" letter-spacing="-0.14" textLength="34.57" lengthAdjust="spacingAndGlyphs">05:59</tspan></text>
<text transform="translate(694.05,653)" class="m"><tspan x="-0.55" letter-spacing="-0.6" textLength="31.31" lengthAdjust="spacingAndGlyphs">06:01</tspan></text>
<text transform="translate(14.8,668)" class="m"><tspan x="-0.05" textLength="6.62" lengthAdjust="spacingAndGlyphs">V</tspan><tspan x="8.54" textLength="7.17" lengthAdjust="spacingAndGlyphs">-</tspan><tspan x="17.09" textLength="7.59" lengthAdjust="spacingAndGlyphs">E</tspan> <tspan x="31.14" letter-spacing="-0.07">Ang</tspan> <tspan x="59.46" letter-spacing="1.25">(deg)</tspan></text>
<text transform="translate(122.9,668)" class="m b"><tspan x="-1.06" letter-spacing="-0.4" textLength="40.49" lengthAdjust="spacingAndGlyphs">145.47</tspan></text>
<text transform="translate(193.9,668)" class="m b"><tspan x="-1.06" letter-spacing="-0.4" textLength="40.49" lengthAdjust="spacingAndGlyphs">145.47</tspan></text>
<text transform="translate(264.9,668)" class="m b"><tspan x="-1.06" letter-spacing="-0.4" textLength="40.49" lengthAdjust="spacingAndGlyphs">145.47</tspan></text>
<text transform="translate(335.9,668)" class="m b"><tspan x="-1.06" letter-spacing="-0.4" textLength="40.49" lengthAdjust="spacingAndGlyphs">145.47</tspan></text>
<text transform="translate(406.9,668)" class="m b"><tspan x="-1.06" letter-spacing="-0.4" textLength="40.49" lengthAdjust="spacingAndGlyphs">145.47</tspan></text>
<text transform="translate(477.9,668)" class="m b"><tspan x="-1.06" letter-spacing="-0.4" textLength="40.49" lengthAdjust="spacingAndGlyphs">145.47</tspan></text>
<text transform="translate(548.9,668)" class="m b"><tspan x="-1.06" letter-spacing="-0.4" textLength="40.49" lengthAdjust="spacingAndGlyphs">145.47</tspan></text>
<text transform="translate(618.9,668)" class="m b"><tspan x="-1.06" letter-spacing="-0.4" textLength="40.49" lengthAdjust="spacingAndGlyphs">145.47</tspan></text>
<text transform="translate(689.8,668)" class="m b"><tspan x="-1.06" letter-spacing="-0.4" textLength="40.49" lengthAdjust="spacingAndGlyphs">145.47</tspan></text>
<text transform="translate(57.8,683)" class="m"><tspan x="-0.86" letter-spacing="-0.6" textLength="18.24" lengthAdjust="spacingAndGlyphs">LST</tspan> <tspan x="25.56" letter-spacing="1.84">(hr)</tspan></text>
<text transform="translate(127.1,683)" class="m b"><tspan x="-1.05" letter-spacing="-0.6" textLength="31.77" lengthAdjust="spacingAndGlyphs">15.85</tspan></text>
<text transform="translate(198.1,683)" class="m"><tspan x="-1.05" letter-spacing="-0.6" textLength="31.77" lengthAdjust="spacingAndGlyphs">15.85</tspan></text>
<text transform="translate(269.1,683)" class="m"><tspan x="-1.06" letter-spacing="-0.6" textLength="31.84" lengthAdjust="spacingAndGlyphs">15.86</tspan></text>
<text transform="translate(340.1,683)" class="m"><tspan x="-1.06" letter-spacing="-0.6" textLength="31.91" lengthAdjust="spacingAndGlyphs">15.87</tspan></text>
<text transform="translate(411.1,683)" class="m"><tspan x="-1.06" letter-spacing="-0.6" textLength="31.84" lengthAdjust="spacingAndGlyphs">15.89</tspan></text>
<text transform="translate(482.1,683)" class="m"><tspan x="-1.05" letter-spacing="-0.6" textLength="31.77" lengthAdjust="spacingAndGlyphs">15.90</tspan></text>
<text transform="translate(553.1,683)" class="m"><tspan x="-1.06" letter-spacing="-0.6" textLength="31.91" lengthAdjust="spacingAndGlyphs">15.92</tspan></text>
<text transform="translate(623.1,683)" class="m"><tspan x="-1.05" letter-spacing="-0.6" textLength="31.62" lengthAdjust="spacingAndGlyphs">15.94</tspan></text>
<text transform="translate(694,683)" class="m"><tspan x="-1.05" letter-spacing="-0.6" textLength="31.77" lengthAdjust="spacingAndGlyphs">15.98</tspan></text>
<text transform="translate(40.9,698)" class="m"><tspan x="-0.93" letter-spacing="-0.04" textLength="29.71" lengthAdjust="spacingAndGlyphs">F10.7</tspan> <tspan x="36.26" letter-spacing="1.56">(sfu)</tspan></text>
<text transform="translate(126.25,698)" class="m b"><tspan x="-0.91" letter-spacing="-0.6" textLength="33.4" lengthAdjust="spacingAndGlyphs">121.71</tspan></text>
<text transform="translate(195.75,698)" class="m b"><tspan x="-0.99" letter-spacing="-0.6" textLength="36.49" lengthAdjust="spacingAndGlyphs">121.72</tspan></text>
<text transform="translate(266.75,698)" class="m b"><tspan x="-0.99" letter-spacing="-0.6" textLength="36.42" lengthAdjust="spacingAndGlyphs">121.73</tspan></text>
<text transform="translate(337.75,698)" class="m b"><tspan x="-0.99" letter-spacing="-0.6" textLength="36.42" lengthAdjust="spacingAndGlyphs">121.73</tspan></text>
<text transform="translate(408.75,698)" class="m b"><tspan x="-0.98" letter-spacing="-0.6" textLength="36.22" lengthAdjust="spacingAndGlyphs">121.74</tspan></text>
<text transform="translate(479.75,698)" class="m b"><tspan x="-0.99" letter-spacing="-0.6" textLength="36.35" lengthAdjust="spacingAndGlyphs">121.75</tspan></text>
<text transform="translate(550.75,698)" class="m b"><tspan x="-0.99" letter-spacing="-0.6" textLength="36.35" lengthAdjust="spacingAndGlyphs">121.75</tspan></text>
<text transform="translate(620.75,698)" class="m b"><tspan x="-0.99" letter-spacing="-0.6" textLength="36.42" lengthAdjust="spacingAndGlyphs">121.76</tspan></text>
<text transform="translate(690,698)" class="m b"><tspan x="-1.06" letter-spacing="-0.48" textLength="39.92" lengthAdjust="spacingAndGlyphs">122.03</tspan></text>
<text transform="translate(883,46)" class="s b"><tspan x="-0.77" letter-spacing="-0.1">El</tspan></text>
<text transform="translate(902,83)" font-size="7.8" class="b"><tspan x="-0.58" letter-spacing="0.24">10</tspan></text>
<text transform="translate(910.5,79.5)" font-size="6" class="b"><tspan x="-0.31" letter-spacing="0.76" textLength="7.89" lengthAdjust="spacingAndGlyphs">-4</tspan></text>
<text transform="translate(902,128)" font-size="7.8" class="b"><tspan x="-0.58" letter-spacing="0.24">10</tspan></text>
<text transform="translate(910.5,124.5)" font-size="6" class="b"><tspan x="-0.31" letter-spacing="0.82" textLength="8.03" lengthAdjust="spacingAndGlyphs">-5</tspan></text>
<text transform="translate(902,173)" font-size="7.8" class="b"><tspan x="-0.58" letter-spacing="0.24">10</tspan></text>
<text transform="translate(910.5,169.5)" font-size="6" class="b"><tspan x="-0.31" letter-spacing="0.85" textLength="8.1" lengthAdjust="spacingAndGlyphs">-6</tspan></text>
<text transform="translate(936,44.8) rotate(90)" font-size="10.8"><tspan x="-0.49" letter-spacing="-0.11">ergs</tspan><tspan x="22.75" textLength="4.05" lengthAdjust="spacingAndGlyphs">/</tspan><tspan x="28.08" textLength="4.52" lengthAdjust="spacingAndGlyphs">(</tspan><tspan x="33.71" letter-spacing="-0.38">cm</tspan><tspan x="48.31" letter-spacing="-0.6" textLength="6.24" lengthAdjust="spacingAndGlyphs">**</tspan><tspan x="58.11" textLength="5.5" lengthAdjust="spacingAndGlyphs">2</tspan><tspan x="65.06" textLength="6.25" lengthAdjust="spacingAndGlyphs">-</tspan><tspan x="71.88" letter-spacing="1.12">sr</tspan><tspan x="82.56" textLength="6.25" lengthAdjust="spacingAndGlyphs">-</tspan><tspan x="89.88" letter-spacing="-0.45">sec</tspan><tspan x="106.87" textLength="6.12" lengthAdjust="spacingAndGlyphs">-</tspan><tspan x="114.69" letter-spacing="-0.6" textLength="10.08" lengthAdjust="spacingAndGlyphs">eV</tspan><tspan x="125.86" textLength="4.61" lengthAdjust="spacingAndGlyphs">)</tspan></text>
<text transform="translate(865.5,357)" class="s b"><tspan x="-0.77" letter-spacing="-0.27">DEF</tspan></text>
<text transform="translate(889,363)" font-size="7.8" class="b"><tspan x="-0.58" letter-spacing="0.24">10</tspan></text>
<text transform="translate(897.5,359.5)" font-size="6" class="b"><tspan x="-0.31" letter-spacing="0.76" textLength="7.89" lengthAdjust="spacingAndGlyphs">-4</tspan></text>
<text transform="translate(889,393)" font-size="7.8" class="b"><tspan x="-0.58" letter-spacing="0.24">10</tspan></text>
<text transform="translate(897.5,389.5)" font-size="6" class="b"><tspan x="-0.31" letter-spacing="0.82" textLength="8.03" lengthAdjust="spacingAndGlyphs">-5</tspan></text>
<text transform="translate(889,423)" font-size="7.8" class="b"><tspan x="-0.58" letter-spacing="0.24">10</tspan></text>
<text transform="translate(897.5,419.5)" font-size="6" class="b"><tspan x="-0.31" letter-spacing="0.85" textLength="8.1" lengthAdjust="spacingAndGlyphs">-6</tspan></text>
<text transform="translate(889,453)" font-size="7.8" class="b"><tspan x="-0.58" letter-spacing="0.24">10</tspan></text>
<text transform="translate(897.5,449.5)" font-size="6" class="b"><tspan x="-0.31" letter-spacing="0.88" textLength="8.16" lengthAdjust="spacingAndGlyphs">-7</tspan></text>
<text transform="translate(889,484)" font-size="7.8" class="b"><tspan x="-0.58" letter-spacing="0.24">10</tspan></text>
<text transform="translate(897.5,480.5)" font-size="6" class="b"><tspan x="-0.31" letter-spacing="0.82" textLength="8.03" lengthAdjust="spacingAndGlyphs">-8</tspan></text>
<text transform="translate(923,355.8) rotate(90)" font-size="10.8"><tspan x="-0.49" letter-spacing="-0.11">ergs</tspan><tspan x="22.75" textLength="4.05" lengthAdjust="spacingAndGlyphs">/</tspan><tspan x="28.08" textLength="4.52" lengthAdjust="spacingAndGlyphs">(</tspan><tspan x="33.71" letter-spacing="-0.38">cm</tspan><tspan x="48.31" letter-spacing="-0.6" textLength="6.24" lengthAdjust="spacingAndGlyphs">**</tspan><tspan x="58.11" textLength="5.5" lengthAdjust="spacingAndGlyphs">2</tspan><tspan x="65.06" textLength="6.25" lengthAdjust="spacingAndGlyphs">-</tspan><tspan x="71.88" letter-spacing="1.12">sr</tspan><tspan x="82.56" textLength="6.25" lengthAdjust="spacingAndGlyphs">-</tspan><tspan x="89.88" letter-spacing="-0.45">sec</tspan><tspan x="106.87" textLength="6.12" lengthAdjust="spacingAndGlyphs">-</tspan><tspan x="114.69" letter-spacing="-0.6" textLength="10.08" lengthAdjust="spacingAndGlyphs">eV</tspan><tspan x="125.86" textLength="4.61" lengthAdjust="spacingAndGlyphs">)</tspan></text>
</svg>
</body>
</html>
